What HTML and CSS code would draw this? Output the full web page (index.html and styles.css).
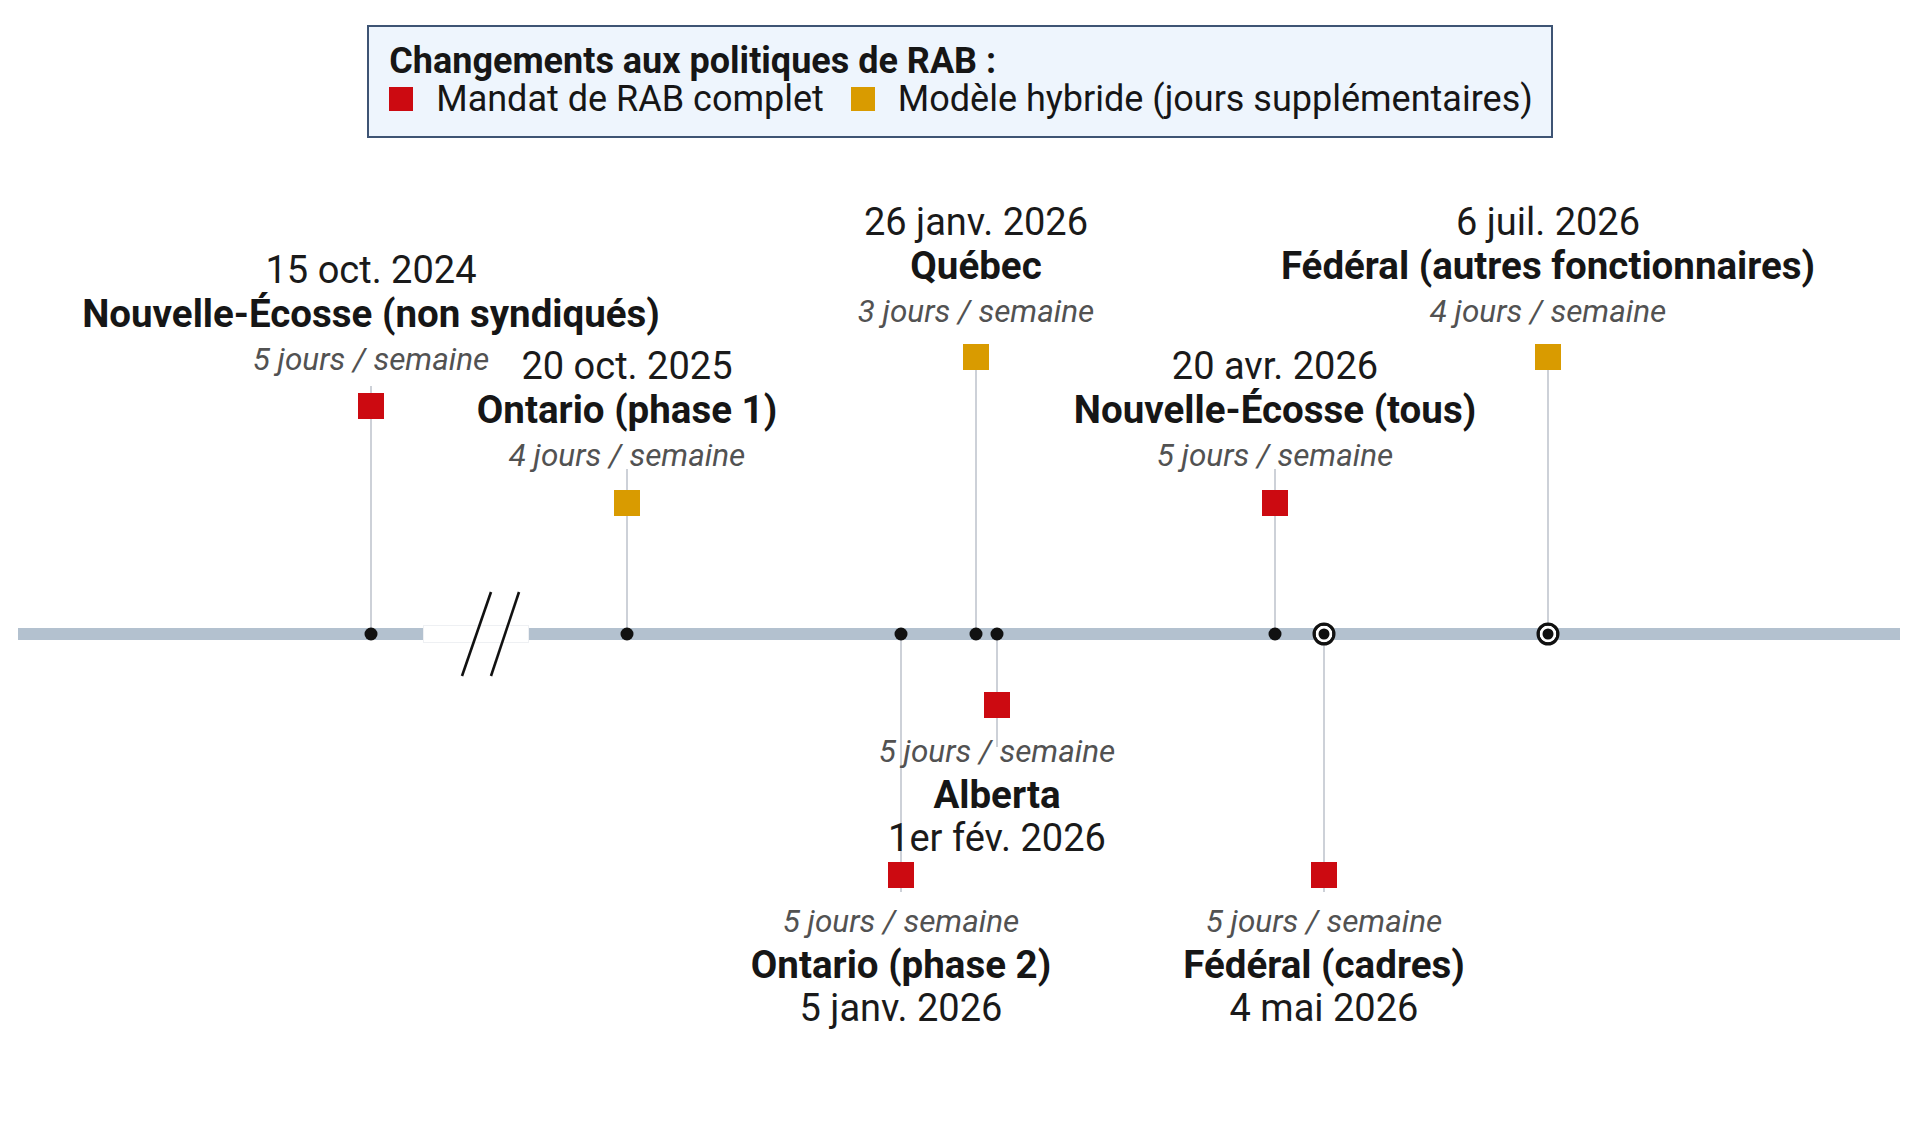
FILE: index.html
```html
<!DOCTYPE html>
<html lang="fr">
<head>
<meta charset="utf-8">
<title>Changements aux politiques de RAB</title>
<link rel="stylesheet" href="styles.css">
</head>
<body>
<main class="page">
  <header class="legend-wrap">
    <div class="legend">
      <div class="legend-title">Changements aux politiques de RAB :</div>
      <div class="legend-items">
        <span class="legend-item"><span class="swatch swatch-full"></span>Mandat de RAB complet</span>
        <span class="legend-item"><span class="swatch swatch-hybrid"></span>Modèle hybride (jours supplémentaires)</span>
      </div>
    </div>
  </header>

  <section class="timeline">
    <div class="axis"></div>
    <div class="axis-break"></div>
    <svg class="break-marks" width="80" height="92" viewBox="0 0 80 92">
      <line x1="41" y1="4" x2="12" y2="88"/>
      <line x1="69" y1="4" x2="41" y2="88"/>
    </svg>

    <div class="stem" style="left:371px;top:248px;height:248px"></div>
    <div class="stem" style="left:627px;top:331px;height:165px"></div>
    <div class="stem" style="left:976px;top:212px;height:284px"></div>
    <div class="stem" style="left:1275px;top:331px;height:165px"></div>
    <div class="stem" style="left:1548px;top:212px;height:284px"></div>
    <div class="stem" style="left:901px;top:496px;height:258px"></div>
    <div class="stem" style="left:997px;top:496px;height:113px"></div>
    <div class="stem" style="left:1324px;top:496px;height:258px"></div>

    <span class="dot" style="left:371px"></span>
    <span class="dot" style="left:627px"></span>
    <span class="dot" style="left:901px"></span>
    <span class="dot" style="left:976px"></span>
    <span class="dot" style="left:997px"></span>
    <span class="dot" style="left:1275px"></span>
    <span class="ring" style="left:1324px"></span>
    <span class="ring" style="left:1548px"></span>

    <span class="marker marker-full" style="left:371px;top:268px"></span>
    <span class="marker marker-hybrid" style="left:627px;top:365px"></span>
    <span class="marker marker-hybrid" style="left:976px;top:219px"></span>
    <span class="marker marker-full" style="left:1275px;top:365px"></span>
    <span class="marker marker-hybrid" style="left:1548px;top:219px"></span>
    <span class="marker marker-full" style="left:901px;top:737px"></span>
    <span class="marker marker-full" style="left:997px;top:567px"></span>
    <span class="marker marker-full" style="left:1324px;top:737px"></span>

    <div class="label above" style="left:371px;top:110px">
      <div class="date">15 oct. 2024</div>
      <div class="name">Nouvelle-Écosse (non syndiqués)</div>
      <div class="sub">5 jours / semaine</div>
    </div>
    <div class="label above" style="left:627px;top:206px">
      <div class="date">20 oct. 2025</div>
      <div class="name">Ontario (phase 1)</div>
      <div class="sub">4 jours / semaine</div>
    </div>
    <div class="label above" style="left:976px;top:62px">
      <div class="date">26 janv. 2026</div>
      <div class="name">Québec</div>
      <div class="sub">3 jours / semaine</div>
    </div>
    <div class="label above" style="left:1275px;top:206px">
      <div class="date">20 avr. 2026</div>
      <div class="name">Nouvelle-Écosse (tous)</div>
      <div class="sub">5 jours / semaine</div>
    </div>
    <div class="label above" style="left:1548px;top:62px">
      <div class="date">6 juil. 2026</div>
      <div class="name">Fédéral (autres fonctionnaires)</div>
      <div class="sub">4 jours / semaine</div>
    </div>

    <div class="label below" style="left:901px;top:762px">
      <div class="sub">5 jours / semaine</div>
      <div class="name">Ontario (phase 2)</div>
      <div class="date">5 janv. 2026</div>
    </div>
    <div class="label below" style="left:997px;top:592px">
      <div class="sub">5 jours / semaine</div>
      <div class="name">Alberta</div>
      <div class="date">1er fév. 2026</div>
    </div>
    <div class="label below" style="left:1324px;top:762px">
      <div class="sub">5 jours / semaine</div>
      <div class="name">Fédéral (cadres)</div>
      <div class="date">4 mai 2026</div>
    </div>
  </section>
</main>
</body>
</html>
```

FILE: styles.css
```css
* { box-sizing: border-box; }

html, body {
  margin: 0;
  padding: 0;
  background: #ffffff;
}

body {
  width: 1920px;
  height: 1133px;
  overflow: hidden;
  font-family: Roboto, "Noto Sans", "Liberation Sans", sans-serif;
  color: #1a1a1a;
}

.page {
  display: flex;
  flex-direction: column;
  width: 1920px;
}

/* ---------- Legend ---------- */
.legend-wrap {
  display: flex;
  justify-content: center;
  padding-top: 25px;
}

.legend {
  background: #eef5fd;
  border: 2px solid #3e5474;
  padding: 15px 18px 18px 20px;
}

.legend-title {
  font-size: 36px;
  font-weight: 700;
  line-height: 38px;
  color: #161616;
}

.legend-items {
  display: flex;
  gap: 27px;
  font-size: 36px;
  line-height: 38px;
  color: #161616;
}

.legend-item {
  display: flex;
  align-items: center;
  gap: 23px;
}

.swatch {
  width: 24px;
  height: 24px;
  flex: none;
}

.swatch-full { background: #cc0a11; }
.swatch-hybrid { background: #d99b00; }

/* ---------- Timeline ---------- */
.timeline {
  position: relative;
  height: 995px;
}

.axis {
  position: absolute;
  left: 18px;
  top: 490px;
  width: 1882px;
  height: 12px;
  background: #b3c1cf;
}

.axis-break {
  position: absolute;
  left: 423px;
  top: 487px;
  width: 106px;
  height: 18px;
  background: #ffffff;
  border: 1px solid #eef0f3;
}

.break-marks {
  position: absolute;
  left: 450px;
  top: 450px;
  overflow: visible;
}

.break-marks line {
  stroke: #111111;
  stroke-width: 2.6;
  stroke-linecap: butt;
}

.stem {
  position: absolute;
  width: 1.5px;
  margin-left: -0.75px;
  background: #cdd1d8;
}

.dot,
.ring {
  position: absolute;
  top: 496px;
  border-radius: 50%;
  transform: translate(-50%, -50%);
}

.dot {
  width: 13px;
  height: 13px;
  background: #111111;
}

.ring {
  width: 23px;
  height: 23px;
  background: #111111;
  border: 3.5px solid #111111;
  box-shadow: inset 0 0 0 3px #ffffff;
}

.marker {
  position: absolute;
  width: 26px;
  height: 26px;
  transform: translate(-50%, -50%);
}

.marker-full { background: #cc0a11; }
.marker-hybrid { background: #d99b00; }

.label {
  position: absolute;
  transform: translateX(-50%);
  text-align: center;
  white-space: nowrap;
}

.date {
  font-size: 38px;
  font-weight: 400;
  line-height: 44px;
  color: #1a1a1a;
}

.name {
  font-size: 38.5px;
  font-weight: 700;
  line-height: 44px;
  color: #161616;
}

.sub {
  font-size: 31.5px;
  font-style: italic;
  line-height: 44px;
  color: #525252;
}

.above .sub { margin-top: 2px; }
.below .name { line-height: 42px; }
```
